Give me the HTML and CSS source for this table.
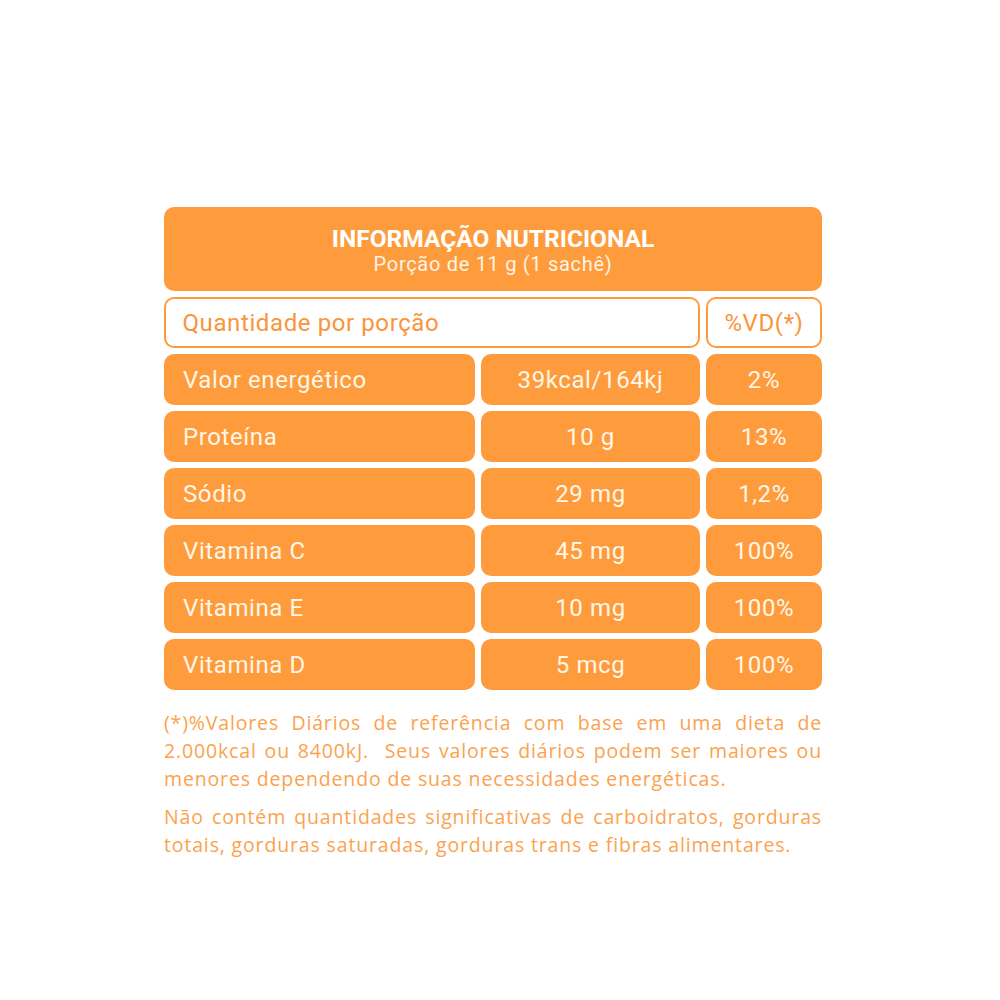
FILE: index.html
```html
<!DOCTYPE html>
<html lang="pt">
<head>
<meta charset="utf-8">
<link rel="stylesheet" href="styles.css">
</head>
<body>
<div class="panel">
  <div class="head">
    <div class="title">INFORMAÇÃO NUTRICIONAL</div>
    <div class="sub">Porção de 11 g (1 sachê)</div>
  </div>
  <div class="row">
    <div class="cell outline wide">Quantidade por porção</div>
    <div class="cell outline vd">%VD(*)</div>
  </div>
  <div class="row"><div class="cell name">Valor energético</div><div class="cell qty">39kcal/164kj</div><div class="cell vd">2%</div></div>
  <div class="row"><div class="cell name">Proteína</div><div class="cell qty">10 g</div><div class="cell vd">13%</div></div>
  <div class="row"><div class="cell name">Sódio</div><div class="cell qty">29 mg</div><div class="cell vd">1,2%</div></div>
  <div class="row"><div class="cell name">Vitamina C</div><div class="cell qty">45 mg</div><div class="cell vd">100%</div></div>
  <div class="row"><div class="cell name">Vitamina E</div><div class="cell qty">10 mg</div><div class="cell vd">100%</div></div>
  <div class="row"><div class="cell name">Vitamina D</div><div class="cell qty">5 mcg</div><div class="cell vd">100%</div></div>
  <div class="notes">
    <p>(*)%Valores Diários de referência com base em uma dieta de 2.000kcal ou 8400kJ.&nbsp; Seus valores diários podem ser maiores ou menores dependendo de suas necessidades energéticas.</p>
    <p>Não contém quantidades significativas de carboidratos, gorduras totais, gorduras saturadas, gorduras trans e fibras alimentares.</p>
  </div>
</div>
</body>
</html>
```
FILE: styles.css
```css
html, body { margin: 0; padding: 0; background: #fff; }
body { font-family: Roboto, "Liberation Sans", sans-serif; }
.panel {
  width: 658px;
  margin: 207px 0 0 164px;
  display: flex;
  flex-direction: column;
  gap: 6px;
}
.head {
  background: #fe9c3d;
  border-radius: 10px;
  height: 84px;
  color: #fff;
  text-align: center;
  box-sizing: border-box;
  padding-top: 18px;
}
.title { font-size: 24.5px; font-weight: 700; line-height: 28px; }
.sub { font-size: 20px; line-height: 22px; letter-spacing: 0.7px; color: #fff3e4; }
.row {
  display: flex;
  gap: 6px;
  height: 51px;
}
.cell {
  background: #fe9c3d;
  border-radius: 10px;
  color: #fff6e6;
  font-size: 24px;
  letter-spacing: 0.6px;
  display: flex;
  align-items: center;
  box-sizing: border-box;
}
.cell.name { width: 311px; padding-left: 19px; }
.cell.qty { width: 219px; justify-content: center; }
.cell.vd { flex: 1; justify-content: center; }
.cell.outline {
  background: #fff;
  border: 2.5px solid #fe9c3d;
  color: #f9953a;
  height: 51px;
}
.cell.wide { width: 536px; padding-left: 16.5px; }
.notes {
  margin-top: 13px;
  color: #fba24f;
  font-family: "Open Sans", sans-serif;
  font-size: 19.5px;
  letter-spacing: 0.85px;
  line-height: 28px;
  text-align: justify;
}
.notes p { margin: 0 0 10px; }
```
